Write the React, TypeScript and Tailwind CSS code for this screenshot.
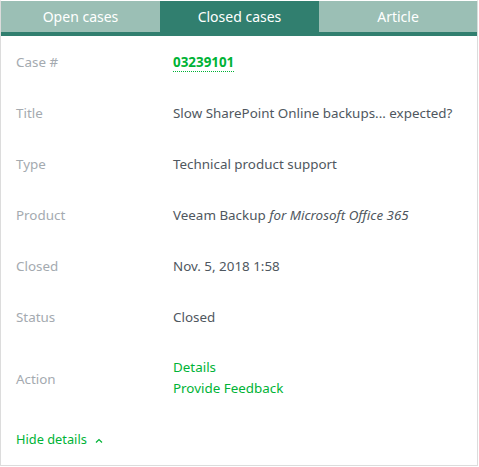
import React from "react";

const rows: { label: string; value: React.ReactNode }[] = [
  {
    label: "Case #",
    value: (
      <a className="font-bold text-[#00b336] border-b border-dotted border-[#00b336] leading-[17px]">
        03239101
      </a>
    ),
  },
  { label: "Title", value: "Slow SharePoint Online backups... expected?" },
  { label: "Type", value: "Technical product support" },
  {
    label: "Product",
    value: (
      <>
        Veeam Backup <i>for Microsoft Office 365</i>
      </>
    ),
  },
  { label: "Closed", value: "Nov. 5, 2018 1:58" },
  { label: "Status", value: "Closed" },
];

export default function App() {
  return (
    <div
      className="w-[479px] h-[467px] bg-white text-[13.4px]"
      style={{ fontFamily: "'Noto Sans', sans-serif" }}
    >
      <div className="w-[478px] h-[466px] border border-[#dcdcdc] border-t-white flex flex-col">
        <div className="flex h-[31px] text-white text-[14px]">
          <div className="w-[159px] bg-[#9bbfb5] flex items-center justify-center">Open cases</div>
          <div className="w-[159px] bg-[#317f6f] flex items-center justify-center">Closed cases</div>
          <div className="flex-1 bg-[#9bbfb5] flex items-center justify-center">Article</div>
        </div>
        <div className="h-[4px] bg-[#317f6f]" />

        <div className="pt-[1px] flex flex-col">
          {rows.map((r) => (
            <div key={r.label} className="flex items-center h-[51px] pl-[15px]">
              <div className="w-[157px] text-[#a4aab0]">{r.label}</div>
              <div className="text-[#4f5760]">{r.value}</div>
            </div>
          ))}

          <div className="flex items-center h-[70px] pl-[15px]">
            <div className="w-[157px] text-[#a4aab0] pt-[2px]">Action</div>
            <div className="flex flex-col text-[#00b336] leading-[21px]">
              <a>Details</a>
              <a>Provide Feedback</a>
            </div>
          </div>

          <div className="flex items-center h-[52px] pt-[2px] pl-[15px] text-[#00b336] text-[12.8px] gap-[8px]">
            <span>Hide details</span>
            <svg width="8" height="5" viewBox="0 0 8 5" fill="none" stroke="#00b336" strokeWidth="1.2">
              <path d="M1 4.5 L4 1.5 L7 4.5" />
            </svg>
          </div>
        </div>
      </div>
    </div>
  );
}
